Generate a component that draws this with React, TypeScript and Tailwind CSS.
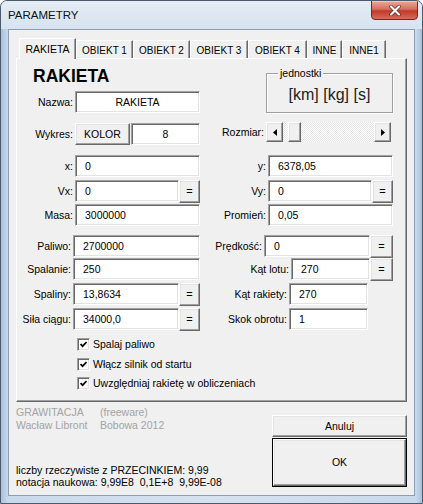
import React from "react";

const sunken =
  "bg-white border border-t-[#a0a0a0] border-l-[#a0a0a0] border-b-white border-r-white shadow-[inset_1px_1px_0_#696969,inset_-1px_-1px_0_#e3e3e3]";
const raised =
  "bg-[#f0f0f0] border border-t-white border-l-white border-b-[#696969] border-r-[#696969] shadow-[inset_-1px_-1px_0_#a0a0a0,inset_1px_1px_0_#e3e3e3]";

function Input({ value, w, center }: { value: string; w: string; center?: boolean }) {
  return (
    <div
      className={`${sunken} ${w} h-[22px] flex items-center text-[10.5px] leading-none ${
        center ? "justify-center" : "pl-[9px]"
      }`}
    >
      {value}
    </div>
  );
}

function Eq({ w }: { w: string }) {
  return (
    <div className={`${raised} ${w} h-[23px] flex items-center justify-center text-[11px] leading-none`}>=</div>
  );
}

function Label({ text }: { text: string }) {
  return <span className="mr-[2px] whitespace-nowrap text-[10.5px] leading-none">{text}</span>;
}

function Row({ mt, left, right }: { mt: string; left: React.ReactNode; right: React.ReactNode }) {
  return (
    <div className={`flex h-[22px] items-center ${mt}`}>
      <div className="w-[183px] flex items-center justify-end">{left}</div>
      <div className="w-[193px] flex items-center justify-end">{right}</div>
    </div>
  );
}

function Check({ text, h }: { text: string; h: string }) {
  return (
    <div className={`flex items-center ${h} pl-[60px]`}>
      <div className={`${sunken} w-[13px] h-[13px] flex items-center justify-center`}>
        <svg width="7" height="7" viewBox="0 0 7 7">
          <polyline points="0.5,3 2.6,5.2 6.6,1" stroke="#000" strokeWidth="1.7" fill="none" />
        </svg>
      </div>
      <span className="ml-[3px] text-[10.5px] leading-none whitespace-nowrap">{text}</span>
    </div>
  );
}

function Tab({ text, w, selected }: { text: string; w: string; selected?: boolean }) {
  if (selected) {
    return (
      <div
        className={`${w} h-[21px] -mb-[1px] relative z-10 bg-[#f0f0f0] border-t border-l border-t-white border-l-white border-r border-r-[#696969] shadow-[inset_-1px_0_0_#a0a0a0] flex items-start justify-center pt-[4px] text-[10.5px] leading-[12px]`}
      >
        {text}
      </div>
    );
  }
  return (
    <div
      className={`${w} h-[18px] bg-[#f0f0f0] border-t border-l border-t-white border-l-white border-r border-r-[#696969] shadow-[inset_-1px_0_0_#a0a0a0] flex items-start justify-center pt-[4px] text-[10px] leading-[12px]`}
    >
      {text}
    </div>
  );
}

export default function App() {
  return (
    <div className="w-[423px] h-[504px] overflow-hidden rounded-t-[7px] border border-[#4d5a6b] bg-[linear-gradient(90deg,#a9c1de_0px,#c9d9ec_7px,#d6e2ef_50%,#c9d9ec_415px,#9fb6d3_423px)] font-['Liberation_Sans',Arial,sans-serif] text-black">
      {/* title bar */}
      <div className="h-[28px] flex items-start bg-[linear-gradient(180deg,#e4ecf5_0%,#d7e3f0_100%)]">
        <div className="pl-[7px] pt-[8px] text-[11.5px] leading-[13px] text-[#111]">PARAMETRY</div>
        <div className="ml-auto mr-[4px] w-[47px] h-[20px] -mt-[1px] rounded-b-[4px] border border-[#6e2a22] bg-[linear-gradient(180deg,#e9a99c_0%,#d5705f_45%,#c23a2a_55%,#d66a56_100%)] shadow-[inset_0_1px_0_#f3c6bc] flex items-center justify-center">
          <svg width="12" height="11" viewBox="0 0 12 11">
            <path d="M2 1.5 L10 9.5 M10 1.5 L2 9.5" stroke="#5a1a12" strokeWidth="3.4" strokeLinecap="round" />
            <path d="M2 1.5 L10 9.5 M10 1.5 L2 9.5" stroke="#ffffff" strokeWidth="2.2" strokeLinecap="round" />
          </svg>
        </div>
      </div>

      {/* client area */}
      <div className="mx-[7px] h-[467px] bg-[#f0f0f0] border border-[#8e9db1] flex flex-col">
        <div className="pl-[7px] pt-[8px]">
          {/* tab strip */}
          <div className="h-[20px] flex items-end pl-[3px]">
            <Tab text="RAKIETA" w="w-[57px]" selected />
            <Tab text="OBIEKT 1" w="w-[57px]" />
            <Tab text="OBIEKT 2" w="w-[57px]" />
            <Tab text="OBIEKT 3" w="w-[58px]" />
            <Tab text="OBIEKT 4" w="w-[59px]" />
            <Tab text="INNE" w="w-[35px]" />
            <Tab text="INNE1" w="w-[44px]" />
          </div>

          {/* tab panel */}
          <div className="w-[391px] h-[344px] border border-t-white border-l-white border-r-[#696969] border-b-[#696969] shadow-[inset_-1px_-1px_0_#a0a0a0]">
            {/* top section */}
            <div className="flex items-start">
              <div className="w-[183px]">
                <div className="h-[32px] pt-[7px] pl-[16px] text-[17.5px] font-bold leading-[20px]">RAKIETA</div>
                <div className="flex h-[22px] items-center justify-end">
                  <Label text="Nazwa:" />
                  <Input value="RAKIETA" w="w-[125px]" center />
                </div>
                <div className="flex h-[22px] items-center justify-end mt-[10px]">
                  <Label text="Wykres:" />
                  <div className={`${raised} w-[55px] h-[22px] flex items-center justify-center text-[10.5px] leading-none`}>
                    KOLOR
                  </div>
                  <div className="ml-[1px]">
                    <Input value="8" w="w-[69px]" center />
                  </div>
                </div>
              </div>
              <div className="w-[193px]">
                <div className="mt-[14px] ml-auto w-[127px] h-[40px] relative border border-[#a0a0a0] shadow-[inset_1px_1px_0_#ffffff,1px_1px_0_#ffffff] flex items-center justify-center pt-[3px]">
                  <span className="absolute left-[11px] -top-[7px] px-[2px] bg-[#f0f0f0] text-[10.5px] leading-[12px]">
                    jednostki
                  </span>
                  <span className="text-[16px] leading-[18px] text-[#222]">[km] [kg] [s]</span>
                </div>
                <div className="mt-[9px] flex h-[20px] items-center justify-end pr-[2px]">
                  <Label text="Rozmiar:" />
                  <div className="w-[125px] h-[20px] flex bg-[repeating-conic-gradient(#ffffff_0%_25%,#e6e6e6_0%_50%)] bg-[length:2px_2px]">
                    <div className={`${raised} w-[17px] h-[20px] flex items-center justify-center`}>
                      <svg width="4" height="7" viewBox="0 0 4 7">
                        <polygon points="4,0 0,3.5 4,7" fill="#000" />
                      </svg>
                    </div>
                    <div className="w-[5px]" />
                    <div className={`${raised} w-[13px] h-[20px]`} />
                    <div className="flex-1" />
                    <div className={`${raised} w-[17px] h-[20px] flex items-center justify-center`}>
                      <svg width="4" height="7" viewBox="0 0 4 7">
                        <polygon points="0,0 4,3.5 0,7" fill="#000" />
                      </svg>
                    </div>
                  </div>
                </div>
              </div>
            </div>

            <Row
              mt="mt-[10px]"
              left={
                <>
                  <Label text="x:" />
                  <Input value="0" w="w-[125px]" />
                </>
              }
              right={
                <>
                  <Label text="y:" />
                  <Input value="6378,05" w="w-[125px]" />
                </>
              }
            />
            <Row
              mt="mt-[3px]"
              left={
                <>
                  <Label text="Vx:" />
                  <Input value="0" w="w-[104px]" />
                  <Eq w="w-[21px]" />
                </>
              }
              right={
                <>
                  <Label text="Vy:" />
                  <Input value="0" w="w-[104px]" />
                  <Eq w="w-[21px]" />
                </>
              }
            />
            <Row
              mt="mt-[2px]"
              left={
                <>
                  <Label text="Masa:" />
                  <Input value="3000000" w="w-[125px]" />
                </>
              }
              right={
                <>
                  <Label text="Promień:" />
                  <Input value="0,05" w="w-[125px]" />
                </>
              }
            />
            <Row
              mt="mt-[9px]"
              left={
                <>
                  <Label text="Paliwo:" />
                  <Input value="2700000" w="w-[127px]" />
                </>
              }
              right={
                <>
                  <Label text="Prędkość:" />
                  <Input value="0" w="w-[106px]" />
                  <Eq w="w-[23px]" />
                </>
              }
            />
            <Row
              mt="mt-[1px]"
              left={
                <>
                  <Label text="Spalanie:" />
                  <Input value="250" w="w-[127px]" />
                </>
              }
              right={
                <>
                  <Label text="Kąt lotu:" />
                  <Input value="270" w="w-[79px]" />
                  <Eq w="w-[23px]" />
                </>
              }
            />
            <Row
              mt="mt-[3px]"
              left={
                <>
                  <Label text="Spaliny:" />
                  <Input value="13,8634" w="w-[106px]" />
                  <Eq w="w-[21px]" />
                </>
              }
              right={
                <>
                  <Label text="Kąt rakiety:" />
                  <Input value="270" w="w-[79px]" />
                  <div className="w-[25px]" />
                </>
              }
            />
            <Row
              mt="mt-[3px]"
              left={
                <>
                  <Label text="Siła ciągu:" />
                  <Input value="34000,0" w="w-[106px]" />
                  <Eq w="w-[21px]" />
                </>
              }
              right={
                <>
                  <Label text="Skok obrotu:" />
                  <Input value="1" w="w-[79px]" />
                  <div className="w-[25px]" />
                </>
              }
            />

            <div className="mt-[5px]">
              <Check text="Spalaj paliwo" h="h-[19px]" />
              <Check text="Włącz silnik od startu" h="h-[20px]" />
              <Check text="Uwzględniaj rakietę w obliczeniach" h="h-[19px]" />
            </div>
          </div>
        </div>

        {/* bottom area */}
        <div className="flex">
          <div className="pl-[7px] pt-[4px]">
            <div className="grid grid-cols-[84px_auto] text-[10.5px] leading-[13px] text-[#a3a3a3]">
              <span>GRAWITACJA</span>
              <span>(freeware)</span>
              <span>Wacław Libront</span>
              <span>Bobowa 2012</span>
            </div>
            <div className="mt-[32px] text-[10.5px] leading-[12px] whitespace-pre">
              <div>liczby rzeczywiste z PRZECINKIEM: 9,99</div>
              <div>notacja naukowa: 9,99E8  0,1E+8  9,99E-08</div>
            </div>
          </div>
          <div className="ml-auto mr-[7px] w-[135px] pt-[13px]">
            <div className={`${raised} h-[22px] flex items-center justify-center text-[10.5px] leading-none`}>Anuluj</div>
            <div className="mt-[1px] h-[49px] border border-black">
              <div className={`${raised} h-full flex items-center justify-center text-[10.5px] leading-none`}>OK</div>
            </div>
          </div>
        </div>
      </div>
    </div>
  );
}
